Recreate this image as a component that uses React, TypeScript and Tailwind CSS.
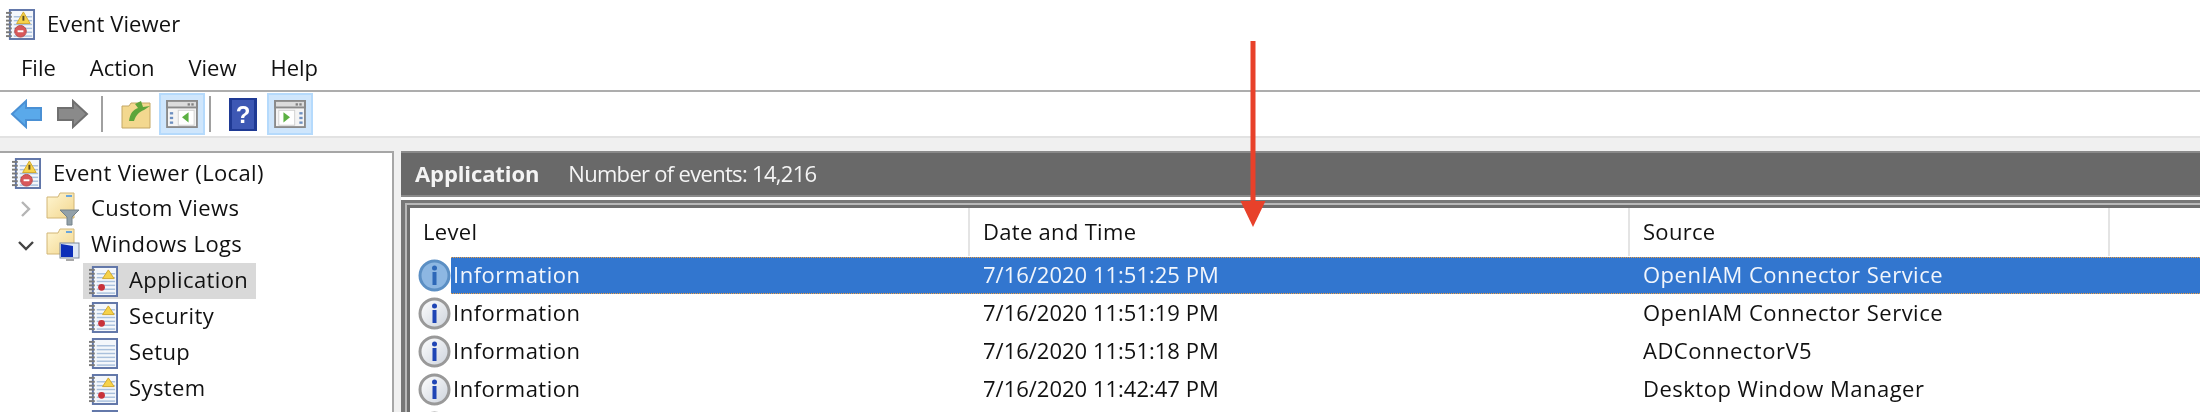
import React from 'react';

const rows = [
  { level: 'Information', time: '7/16/2020 11:51:25 PM', source: 'OpenIAM Connector Service', selected: true },
  { level: 'Information', time: '7/16/2020 11:51:19 PM', source: 'OpenIAM Connector Service' },
  { level: 'Information', time: '7/16/2020 11:51:18 PM', source: 'ADConnectorV5' },
  { level: 'Information', time: '7/16/2020 11:42:47 PM', source: 'Desktop Window Manager' },
  { level: '', time: '', source: '' }, // only the top of the icon shows at the bottom edge
];

function LogBook({ big, plain }: { big?: boolean; plain?: boolean }) {
  return (
    <svg width="29" height="31" viewBox="0 0 30 32" className="shrink-0">
      <rect x="4" y="1" width="25" height="30" fill="#f4f7fb" stroke="#5f75a8" strokeWidth="2" />
      {[8, 12, 16, 20, 24, 28].map((y) => (
        <line key={y} x1="8" x2="27" y1={y} y2={y} stroke="#a9c0dc" strokeWidth="1.5" />
      ))}
      {[4, 8, 12, 16, 20, 24, 28].map((y) => (
        <line key={y} x1="0" x2="6" y1={y} y2={y} stroke="#7a7a7a" strokeWidth="2" />
      ))}
      {!plain && (
        <>
          <path d={big ? 'M18 3l7 12H11z' : 'M20 4l6 9H14z'} fill="#f6d24a" stroke="#d2a82c" />
          {big ? (
            <>
              <line x1="18" y1="7" x2="18" y2="12" stroke="#5a4a20" strokeWidth="2" />
              <circle cx="15" cy="23" r="6" fill="#d8575a" stroke="#b64a4a" />
              <rect x="12" y="22" width="6" height="2" fill="#fff" />
            </>
          ) : (
            <circle cx="13" cy="22" r="3.5" fill="#c8323a" />
          )}
        </>
      )}
    </svg>
  );
}

function Folder({ kind }: { kind: 'filter' | 'screen' }) {
  return (
    <svg width="34" height="34" viewBox="0 0 34 34" className="shrink-0">
      <defs>
        <linearGradient id="fld" x1="0" y1="0" x2="1" y2="1">
          <stop offset="0" stopColor="#fff6d2" />
          <stop offset="1" stopColor="#f2d68e" />
        </linearGradient>
      </defs>
      <path d="M1 5h11l2-4h14v25H1z" fill="url(#fld)" stroke="#d2b677" />
      <rect x="20" y="3" width="6" height="2" fill="#6aa6dc" />
      {kind === 'filter' ? (
        <path d="M14 18h19l-7 7v8h-5v-8z" fill="#93a1a9" stroke="#75828a" />
      ) : (
        <>
          <rect x="14" y="15" width="19" height="15" fill="#dfe8f5" stroke="#7f8a99" />
          <path d="M15 16l12 2v11H15z" fill="#0d2fb8" />
          <path d="M20 31h8v2h-8z" fill="#a8a8a8" />
        </>
      )}
    </svg>
  );
}

function InfoIcon({ selected }: { selected?: boolean }) {
  return (
    <svg width="33" height="33" viewBox="0 0 33 33" className="shrink-0">
      <defs>
        <linearGradient id="inf" x1="0" y1="0" x2="1" y2="1">
          <stop offset="0" stopColor="#ffffff" />
          <stop offset="1" stopColor="#cdd3dc" />
        </linearGradient>
      </defs>
      <circle cx="16.500" cy="16.500" r="14.500" fill={selected ? '#8db7e2' : 'url(#inf)'} stroke={selected ? '#5b8fc4' : '#999'} strokeWidth="3" />
      <circle cx="16.500" cy="9" r="2.500" fill={selected ? '#2d68b8' : '#1f45b5'} />
      <rect x="14.500" y="13" width="4" height="13" fill={selected ? '#2d68b8' : '#1f45b5'} />
    </svg>
  );
}

function ArrowIcon({ dir, color, edge }: { dir: 'left' | 'right'; color: string; edge: string }) {
  return (
    <svg width="33" height="30" viewBox="0 0 33 30">
      <path
        d="M2 15 16 2v7h15v12H16v7z"
        fill={color}
        stroke={edge}
        strokeWidth="2"
        transform={dir === 'right' ? 'matrix(-1 0 0 1 33 0)' : undefined}
      />
    </svg>
  );
}

function PaneIcon({ dir }: { dir: 'left' | 'right' }) {
  const listX = dir === 'left' ? 4 : 27;
  const boxX = dir === 'left' ? 13 : 5;
  return (
    <svg width="32" height="28" viewBox="0 0 34 30">
      <rect x="1" y="1" width="32" height="28" fill="#f4f4f4" stroke="#8a8a8a" strokeWidth="2" />
      <rect x="1" y="1" width="32" height="7" fill="#dcdcdc" stroke="#8a8a8a" strokeWidth="2" />
      <rect x="23" y="3.500" width="2.500" height="2.500" fill="#808080" />
      <rect x="27" y="3.500" width="2.500" height="2.500" fill="#808080" />
      {[13, 18, 23].map((y) => (
        <rect key={y} x={listX} y={y} width="3.500" height="2.500" fill="#6d8fc0" />
      ))}
      <rect x={boxX} y="11" width="17" height="16" fill="#fff" stroke="#d0d0d0" />
      <path d={dir === 'left' ? 'M24 13v11l-7-5.500z' : 'M10 13v11l7-5.500z'} fill="#5bb042" />
    </svg>
  );
}

function ToggleButton({ dir }: { dir: 'left' | 'right' }) {
  return (
    <div className="flex h-[42px] w-[46px] items-center justify-center border-2 border-[#b5dafc] bg-[#cfe6fc]">
      <PaneIcon dir={dir} />
    </div>
  );
}

function TreeRow({ indent, chevron, icon, label, active }: { indent?: string; chevron?: 'right' | 'down'; icon: React.ReactNode; label?: string; active?: boolean }) {
  return (
    <div className={`flex h-[36px] items-center ${indent ?? ''}`}>
      {chevron && (
        <svg width="16" height="16" viewBox="0 0 16 16" className="ml-[18px] mr-[12px] shrink-0" fill="none" strokeWidth="2.400">
          {chevron === 'right' ? <path d="M4 1l7 7-7 7" stroke="#b5b5b5" /> : <path d="M1 5l7 7 7-7" stroke="#444" />}
        </svg>
      )}
      <div className={`flex h-[36px] items-center ${active ? 'bg-[#d9d9d9]' : ''} ${chevron ? '' : 'pr-[8px] pl-[6px]'}`}>
        {icon}
        {label && <span className="ml-[11px] whitespace-nowrap pb-[3px] tracking-[0.4px]">{label}</span>}
      </div>
    </div>
  );
}

export default function App() {
  return (
    <div className="relative flex h-[412px] w-[2200px] flex-col overflow-hidden bg-white font-['Open_Sans',sans-serif] text-[22px] text-[#111] blur-[0.4px]">
      {/* Title bar */}
      <div className="flex h-[48px] items-center pl-[6px]">
        <LogBook big />
        <span className="ml-[12px] pb-[2px] tracking-[0.1px]">Event Viewer</span>
      </div>

      {/* Menu */}
      <div className="flex h-[44px] items-center gap-[34px] border-b-2 border-[#adadad] pb-[3px] pl-[21px]">
        <span>File</span>
        <span>Action</span>
        <span>View</span>
        <span>Help</span>
      </div>

      {/* Toolbar */}
      <div className="flex h-[46px] items-center border-b-2 border-[#e2e2e2] pl-[10px]">
        <ArrowIcon dir="left" color="#5aa9ea" edge="#4a90d4" />
        <div className="ml-[13px]"><ArrowIcon dir="right" color="#8a8a8a" edge="#707070" /></div>
        <div className="ml-[12px] h-[36px] w-[2px] bg-[#a0a0a0]" />
        <svg width="30" height="30" viewBox="0 0 30 30" className="ml-[18px]">
          <path d="M1 7h7l2-3h19v25H1z" fill="#f3d88f" stroke="#c4a764" />
          <path d="M8 22c1-8 4-11 9-13l-3-4 6-3 2 6 7-1-6 4c-5 2-8 5-10 11z" fill="#5da53a" />
        </svg>
        <div className="ml-[8px]"><ToggleButton dir="left" /></div>
        <div className="ml-[4px] h-[36px] w-[2px] bg-[#a0a0a0]" />
        <svg width="28" height="33" viewBox="0 0 28 33" className="ml-[18px]">
          <rect width="28" height="33" fill="#1f3a94" />
          <rect x="3" y="2" width="22" height="29" fill="#3d58b4" />
          <text x="14" y="25" textAnchor="middle" fill="#fff" fontSize="24" fontWeight="700" fontFamily="Liberation Sans">?</text>
        </svg>
        <div className="ml-[10px]"><ToggleButton dir="right" /></div>
      </div>

      <div className="h-[13px] bg-[#f0f0f0]" />

      {/* Main */}
      <div className="flex min-h-0 flex-1 bg-[#f0f0f0]">
        <div className="w-[394px] shrink-0 overflow-hidden border-t-2 border-r-2 border-[#a6a6a6] bg-white pt-[2px]">
          <div className="flex h-[36px] items-center pl-[12px]">
            <LogBook big />
            <span className="ml-[12px] whitespace-nowrap pb-[2px] tracking-[0.35px]">Event Viewer (Local)</span>
          </div>
          <TreeRow chevron="right" icon={<Folder kind="filter" />} label="Custom Views" />
          <TreeRow chevron="down" icon={<Folder kind="screen" />} label="Windows Logs" />
          <TreeRow indent="pl-[83px]" icon={<LogBook />} label="Application" active />
          <TreeRow indent="pl-[83px]" icon={<LogBook />} label="Security" />
          <TreeRow indent="pl-[83px]" icon={<LogBook plain />} label="Setup" />
          <TreeRow indent="pl-[83px]" icon={<LogBook />} label="System" />
          <TreeRow indent="pl-[83px]" icon={<LogBook />} />
        </div>

        <div className="ml-[7px] flex min-w-0 flex-1 flex-col">
          <div className="flex h-[46px] shrink-0 items-center border-t-2 border-b-2 border-[#8a8a8a] bg-[#696969] pb-[2px] pl-[14px] text-[#f4f4f4]">
            <span className="font-bold tracking-[-0.1px]">Application</span>
            <span className="ml-[29px] tracking-[-0.7px]">Number of events: 14,216</span>
          </div>
          <div className="h-[3px] shrink-0 bg-white" />
          <div className="min-h-0 flex-1 border-t-[3px] border-l-[4px] border-[#777]">
            <div className="h-full border-t-[2px] border-l-[2px] border-[#b8b8b8]">
              <div className="h-full overflow-hidden border-t-[3px] border-l-[3px] border-[#6e6e6e] bg-white">
                {/* Column headers */}
                <div className="flex h-[48px] tracking-[0.3px]">
                  <div className="flex w-[560px] items-center border-r-2 border-[#e4e4e4] pb-[2px] pl-[13px]">Level</div>
                  <div className="flex w-[660px] items-center border-r-2 border-[#e4e4e4] pb-[2px] pl-[13px]">Date and Time</div>
                  <div className="flex w-[480px] items-center border-r-2 border-[#e4e4e4] pb-[2px] pl-[13px]">Source</div>
                </div>
                {/* Rows */}
                {rows.map((r, i) => (
                  <div key={i} className="flex h-[38px] items-center pl-[8px]">
                    <InfoIcon selected={r.selected} />
                    <div className={`flex h-[37px] flex-1 items-center pl-[2px] ${r.selected ? 'border-y border-dotted border-[#f0a040] bg-[#3276cf] text-[#f2f6fc]' : ''}`}>
                      <span className="w-[517px] pb-[2px] tracking-[0.5px]">{r.level}</span>
                      <span className="w-[660px] pb-[2px] pl-[13px]">{r.time}</span>
                      <span className="pb-[2px] pl-[13px] tracking-[0.5px]">{r.source}</span>
                    </div>
                  </div>
                ))}
              </div>
            </div>
          </div>
        </div>
      </div>

      {/* Red annotation arrow */}
      <svg width="26" height="186" viewBox="0 0 26 186" className="absolute top-[41px] left-[1240px]">
        <rect x="10.500" y="0" width="5" height="162" fill="#e8412a" />
        <path d="M0.500 160h25l-12.500 26z" fill="#e8412a" />
      </svg>
    </div>
  );
}
